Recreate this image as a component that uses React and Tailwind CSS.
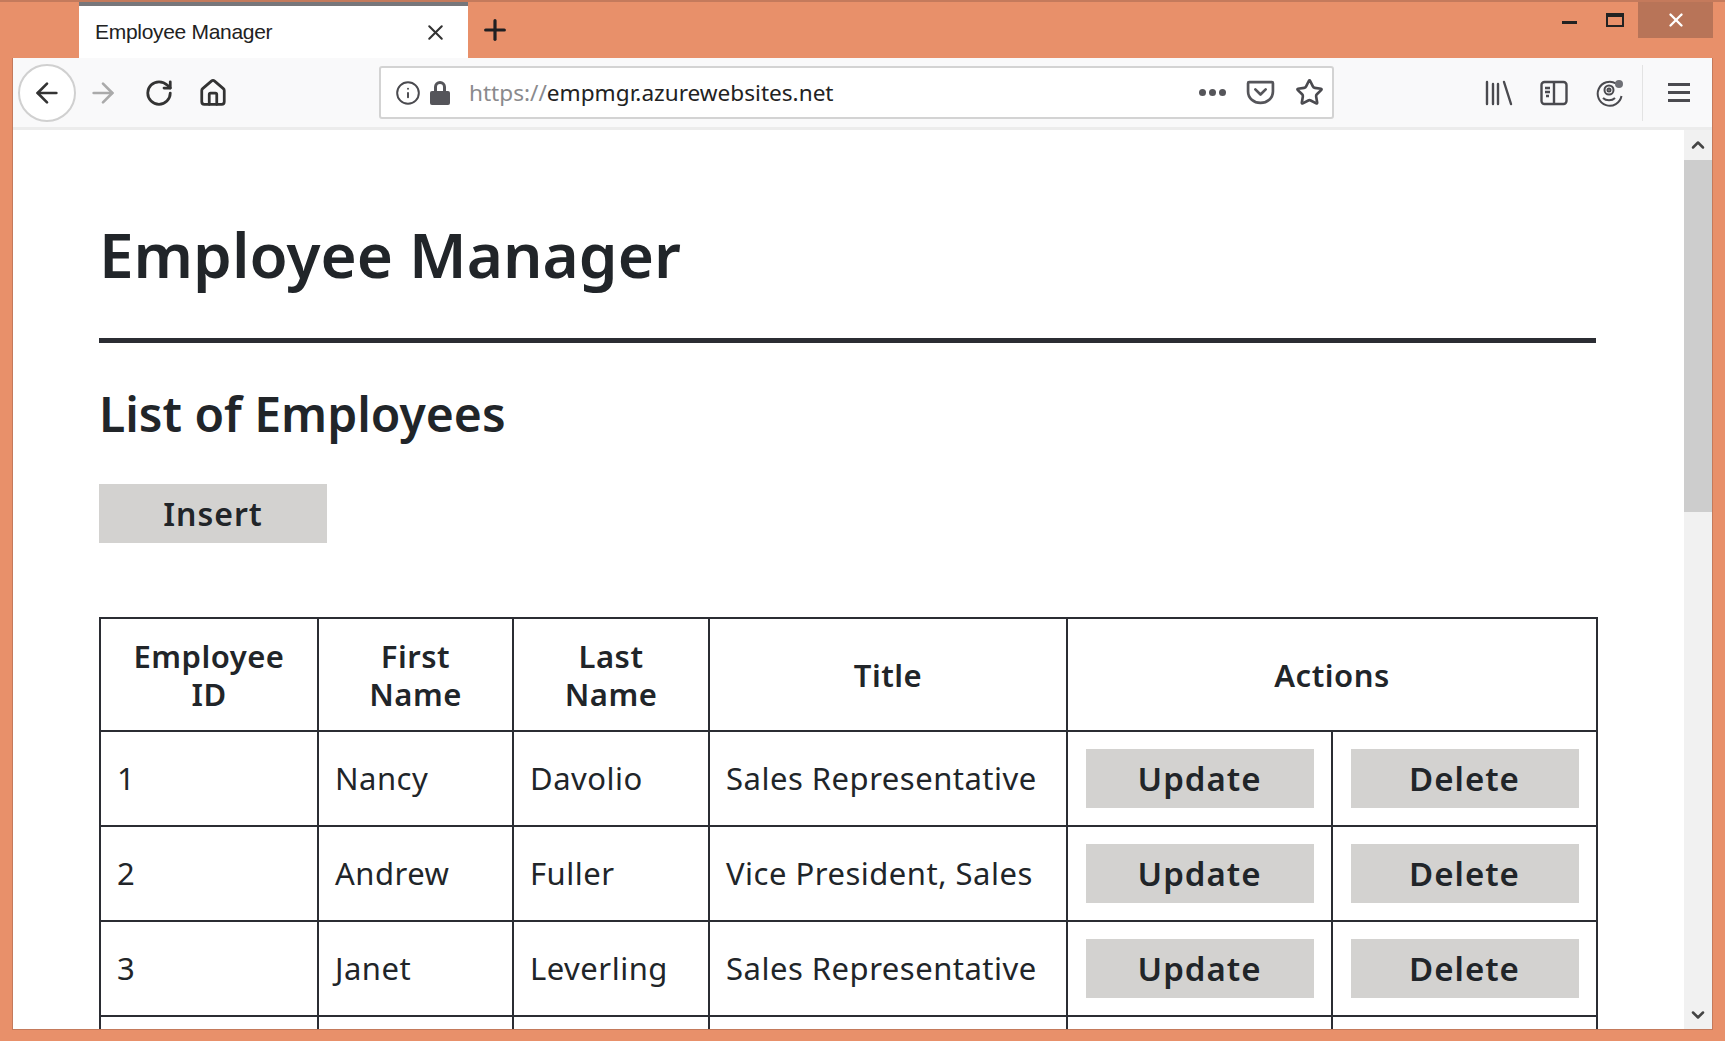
import React from 'react';
import { ArrowLeft, ArrowRight, RotateCw, House, Info, Star, Plus, X, ChevronUp, ChevronDown } from 'lucide-react';

const employees = [
  { id: 1, first: 'Nancy', last: 'Davolio', title: 'Sales Representative' },
  { id: 2, first: 'Andrew', last: 'Fuller', title: 'Vice President, Sales' },
  { id: 3, first: 'Janet', last: 'Leverling', title: 'Sales Representative' },
];

const fontStack = { fontFamily: '"Noto Sans", sans-serif' };

function ActionButton({ label, className = '' }) {
  return (
    <button className={`h-[59px] bg-[#d3d2d0] text-[#212529] text-[33px] font-semibold tracking-[1px] leading-none ${className}`}>
      {label}
    </button>
  );
}

function TitleBar() {
  return (
    <div className="h-[58px] flex shrink-0 border-t-2 border-[#c47a5c]">
      <div className="w-[79px] shrink-0" />
      <div className="w-[389px] shrink-0 bg-white border-t-[4px] border-[#77777b] flex items-center pl-[16px] pr-[20px]">
        <span className="flex-1 text-[21px] text-[#222] font-['Liberation_Sans',sans-serif] tracking-[-0.3px]">Employee Manager</span>
        <X className="w-[25px] h-[25px] text-[#333]" strokeWidth={2} />
      </div>
      <div className="w-[54px] flex items-center justify-center">
        <Plus className="w-[32px] h-[32px] text-[#1f1f22]" strokeWidth={2.4} />
      </div>
      <div className="flex-1" />
      <div className="flex items-start pr-[12px]">
        <div className="w-[22px] h-[38px] flex items-center justify-center mr-[24px]">
          <div className="w-[15px] h-[3px] mt-[2px] bg-[#222]" />
        </div>
        <div className="w-[22px] h-[36px] flex items-center justify-center mr-[12px]">
          <div className="w-[18px] h-[14px] border-2 border-t-[4px] border-[#222]" />
        </div>
        <div className="w-[75px] h-[36px] bg-[#b87458] flex items-center justify-center">
          <X className="w-[22px] h-[22px] text-white" strokeWidth={2.6} />
        </div>
      </div>
    </div>
  );
}

function Toolbar() {
  return (
    <div className="h-[72px] flex items-center shrink-0 bg-[#f9f9fa] border-b-[3px] border-[#ececec] text-[#4a4a4f] relative">
      <div className="w-[58px] h-[58px] ml-[5px] rounded-full bg-white border-2 border-[#d0d0d0] flex items-center justify-center shrink-0">
        <ArrowLeft className="w-[32px] h-[32px] text-[#333]" strokeWidth={2} />
      </div>
      <ArrowRight className="w-[32px] h-[32px] ml-[11px] text-[#aaa]" strokeWidth={2} />
      <RotateCw className="w-[30px] h-[30px] ml-[25px] text-[#333]" strokeWidth={2.2} />
      <House className="w-[30px] h-[30px] ml-[24px] text-[#333]" strokeWidth={2.2} />
      <div className="w-[955px] h-[53px] ml-[151px] shrink-0 bg-white border-2 border-[#d3d3d3] rounded-[3px] flex items-center pl-[14px] pr-[8px]">
        <Info className="w-[26px] h-[26px] text-[#4a4a4f]" strokeWidth={1.8} />
        <svg viewBox="0 0 24 26" className="w-[24px] h-[26px] ml-[7px]" fill="#55555a">
          <path d="M6 11V7a6 6 0 0 1 12 0v4h-3V7a3 3 0 0 0-6 0v4z" />
          <rect x="2" y="11" width="20" height="14" rx="2" />
        </svg>
        <span className="ml-[17px] text-[22.6px] text-[#8a8a8d] font-['Noto_Sans',sans-serif] flex-1">https://<span className="text-[#222]">empmgr.azurewebsites.net</span></span>
        <div className="flex gap-[3px] mr-[20px]">
          <div className="w-[7px] h-[7px] rounded-full bg-[#55555a]" />
          <div className="w-[7px] h-[7px] rounded-full bg-[#55555a]" />
          <div className="w-[7px] h-[7px] rounded-full bg-[#55555a]" />
        </div>
        <svg viewBox="0 0 28 26" className="w-[29px] h-[27px] mr-[20px]" fill="none" stroke="#55555a" strokeWidth="2.6" strokeLinecap="round" strokeLinejoin="round">
          <path d="M3 3h22a1 1 0 0 1 1 1v8c0 6.500-5.500 11-12 11S2 18.500 2 12V4a1 1 0 0 1 1-1z" />
          <path d="M9 10l5 5 5-5" />
        </svg>
        <Star className="w-[29px] h-[29px]" strokeWidth={2.2} />
      </div>
      <svg viewBox="0 0 28 26" className="w-[28px] h-[26px] ml-[151px] shrink-0" fill="none" stroke="#4a4a4f" strokeWidth="2.4" strokeLinecap="round">
        <path d="M2 2v22M8 4v20M13 4v20M19 2l7 22" />
      </svg>
      <svg viewBox="0 0 28 26" className="w-[28px] h-[26px] ml-[27px] shrink-0" fill="none" stroke="#4a4a4f" strokeWidth="2.4">
        <rect x="1.500" y="2" width="25" height="22" rx="3" />
        <path d="M14 2v22M5 8h5M5 12h5M6 16h3" />
      </svg>
      <svg viewBox="0 0 28 28" className="w-[28px] h-[28px] ml-[28px] shrink-0" fill="none" stroke="#4a4a4f" strokeWidth="2">
        <path d="M20 4.500A12 12 0 1 0 25.500 17" />
        <circle cx="13" cy="11" r="4.500" />
        <circle cx="13" cy="11" r="1.500" />
        <path d="M7 19c3 3 9 3 12 0" />
        <circle cx="23" cy="5" r="4" fill="#6f7076" stroke="none" />
      </svg>
      <div className="w-px h-[56px] ml-[18px] bg-[#e3e3e3]" />
      <div className="w-[22px] ml-[25px] flex flex-col gap-[5px] shrink-0">
        <div className="h-[3px] bg-[#4a4a4f]" />
        <div className="h-[3px] bg-[#4a4a4f]" />
        <div className="h-[3px] bg-[#4a4a4f]" />
      </div>
    </div>
  );
}

function Scrollbar() {
  return (
    <div className="w-[28px] shrink-0 bg-[#f1f1f1] flex flex-col">
      <div className="h-[30px] flex items-center justify-center">
        <ChevronUp className="w-[20px] h-[20px] text-[#444]" strokeWidth={3} />
      </div>
      <div className="h-[352px] bg-[#cdcdcd]" />
      <div className="flex-1" />
      <div className="h-[28px] flex items-center justify-center">
        <ChevronDown className="w-[20px] h-[20px] text-[#444]" strokeWidth={3} />
      </div>
    </div>
  );
}

function EmployeeTable() {
  const thClass = 'border-2 border-[#2b2d33] font-semibold leading-[38px] text-center align-middle';
  const tdClass = 'border-2 border-[#2b2d33] pl-[16px] align-middle';
  return (
    <table className="w-[1497px] table-fixed border-collapse text-[31px] tracking-[0.5px] text-[#212529]">
      <colgroup>
        <col className="w-[218px]" />
        <col className="w-[195px]" />
        <col className="w-[196px]" />
        <col className="w-[358px]" />
        <col className="w-[265px]" />
        <col className="w-[265px]" />
      </colgroup>
      <thead>
        <tr className="h-[113px]">
          <th className={thClass}>Employee<br />ID</th>
          <th className={thClass}>First<br />Name</th>
          <th className={thClass}>Last<br />Name</th>
          <th className={thClass}>Title</th>
          <th className={thClass} colSpan={2}>Actions</th>
        </tr>
      </thead>
      <tbody>
        {employees.map((emp) => (
          <tr key={emp.id} className="h-[95px]">
            <td className={tdClass}>{emp.id}</td>
            <td className={tdClass}>{emp.first}</td>
            <td className={tdClass}>{emp.last}</td>
            <td className={tdClass}>{emp.title}</td>
            <td className="border-2 border-[#2b2d33] text-center align-middle">
              <ActionButton label="Update" className="w-[228px]" />
            </td>
            <td className="border-2 border-[#2b2d33] text-center align-middle">
              <ActionButton label="Delete" className="w-[228px]" />
            </td>
          </tr>
        ))}
        {/* next row is cut off by the window edge, only its top border shows */}
        <tr className="h-[95px]">
          <td className={tdClass} />
          <td className={tdClass} />
          <td className={tdClass} />
          <td className={tdClass} />
          <td className={tdClass} />
          <td className={tdClass} />
        </tr>
      </tbody>
    </table>
  );
}

export default function App() {
  return (
    <div className="w-[1725px] h-[1041px] bg-[#e8906a] overflow-hidden flex flex-col" style={fontStack}>
      <TitleBar />
      <div className="flex-1 min-h-0 flex flex-col ml-[12px] mr-[12px] mb-[11px] border-l border-r border-b border-[#c47a5c]">
        <Toolbar />
        <div className="flex-1 min-h-0 flex bg-white">
          <div className="flex-1 min-w-0 overflow-hidden pl-[86px] text-[#212529]">
            <h1 className="mt-[89px] text-[62px] font-semibold leading-[70px]">Employee Manager</h1>
            <div className="mt-[49px] h-[5px] w-[1497px] bg-[#2b2d33]" />
            <h2 className="mt-[43px] text-[48px] font-semibold leading-[56px]">List of Employees</h2>
            <button className="block mt-[42px] w-[228px] h-[59px] bg-[#d3d2d0] text-[32px] font-semibold tracking-[1px] leading-none">Insert</button>
            <div className="mt-[74px]">
              <EmployeeTable />
            </div>
          </div>
          <Scrollbar />
        </div>
      </div>
    </div>
  );
}
